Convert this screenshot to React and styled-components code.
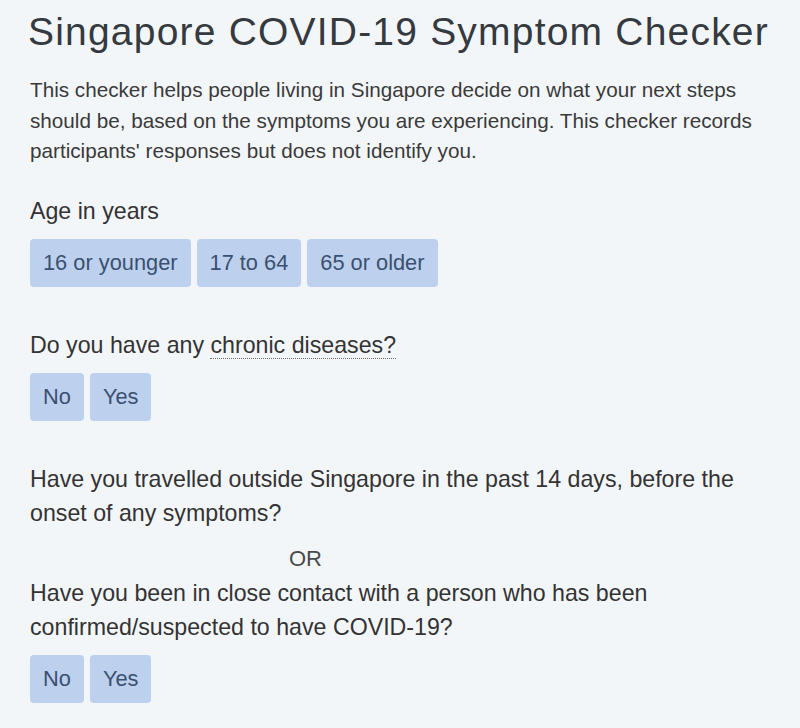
import React from "react";
import styled, { createGlobalStyle } from "styled-components";

const GlobalStyle = createGlobalStyle`
  html, body {
    margin: 0;
    padding: 0;
    background: #f3f6f9;
  }
  body {
    font-family: "Liberation Sans", Arial, sans-serif;
    color: #333;
  }
`;

const Page = styled.main`
  box-sizing: border-box;
  width: 800px;
  min-height: 728px;
  padding: 9px 20px 0 30px;
  background: #f3f6f9;
`;

const Content = styled.div`
  width: 750px;
`;

const Title = styled.h1`
  margin: 0 0 0 -2px;
  font-size: 39px;
  line-height: 46px;
  font-weight: 400;
  letter-spacing: 1.2px;
  white-space: nowrap;
  color: #343a40;
`;

const Intro = styled.p`
  margin: 20px 0 0;
  font-size: 20.7px;
  line-height: 30.5px;
  color: #3a3a3a;
`;

const Section = styled.section`
  margin-top: ${(p) => p.$gap}px;
`;

const Question = styled.p`
  margin: 0;
  font-size: 23.2px;
  line-height: 34px;
  color: #333;
`;

const Term = styled.span`
  border-bottom: 1px dotted #6b6b6b;
`;

const Or = styled.div`
  padding: 12px 0 0 259px;
  font-size: 22px;
  line-height: 34px;
  color: #4a4a4a;
`;

const ButtonRow = styled.div`
  display: flex;
  gap: 6px;
  margin-top: 11px;
`;

const Choice = styled.button`
  height: 48px;
  padding: 0 13px;
  border: none;
  border-radius: 4px;
  background: #bdd0ee;
  color: #3a5070;
  font-family: "Liberation Sans", Arial, sans-serif;
  font-size: 21.8px;
  cursor: pointer;
`;

const Choices = ({ options }) => (
  <ButtonRow>
    {options.map((o) => (
      <Choice key={o}>{o}</Choice>
    ))}
  </ButtonRow>
);

export default function App() {
  return (
    <>
      <GlobalStyle />
      <Page>
        <Content>
          <Title>Singapore COVID-19 Symptom Checker</Title>
          <Intro>
            This checker helps people living in Singapore decide on what your
            next steps should be, based on the symptoms you are experiencing.
            This checker records participants' responses but does not identify
            you.
          </Intro>

          <Section $gap={27}>
            <Question>Age in years</Question>
            <Choices options={["16 or younger", "17 to 64", "65 or older"]} />
          </Section>

          <Section $gap={41}>
            <Question>
              Do you have any <Term>chronic diseases?</Term>
            </Question>
            <Choices options={["No", "Yes"]} />
          </Section>

          <Section $gap={41}>
            <Question>
              Have you travelled outside Singapore in the past 14 days, before
              the onset of any symptoms?
            </Question>
            <Or>OR</Or>
            <Question>
              Have you been in close contact with a person who has been
              confirmed/suspected to have COVID-19?
            </Question>
            <Choices options={["No", "Yes"]} />
          </Section>
        </Content>
      </Page>
    </>
  );
}
